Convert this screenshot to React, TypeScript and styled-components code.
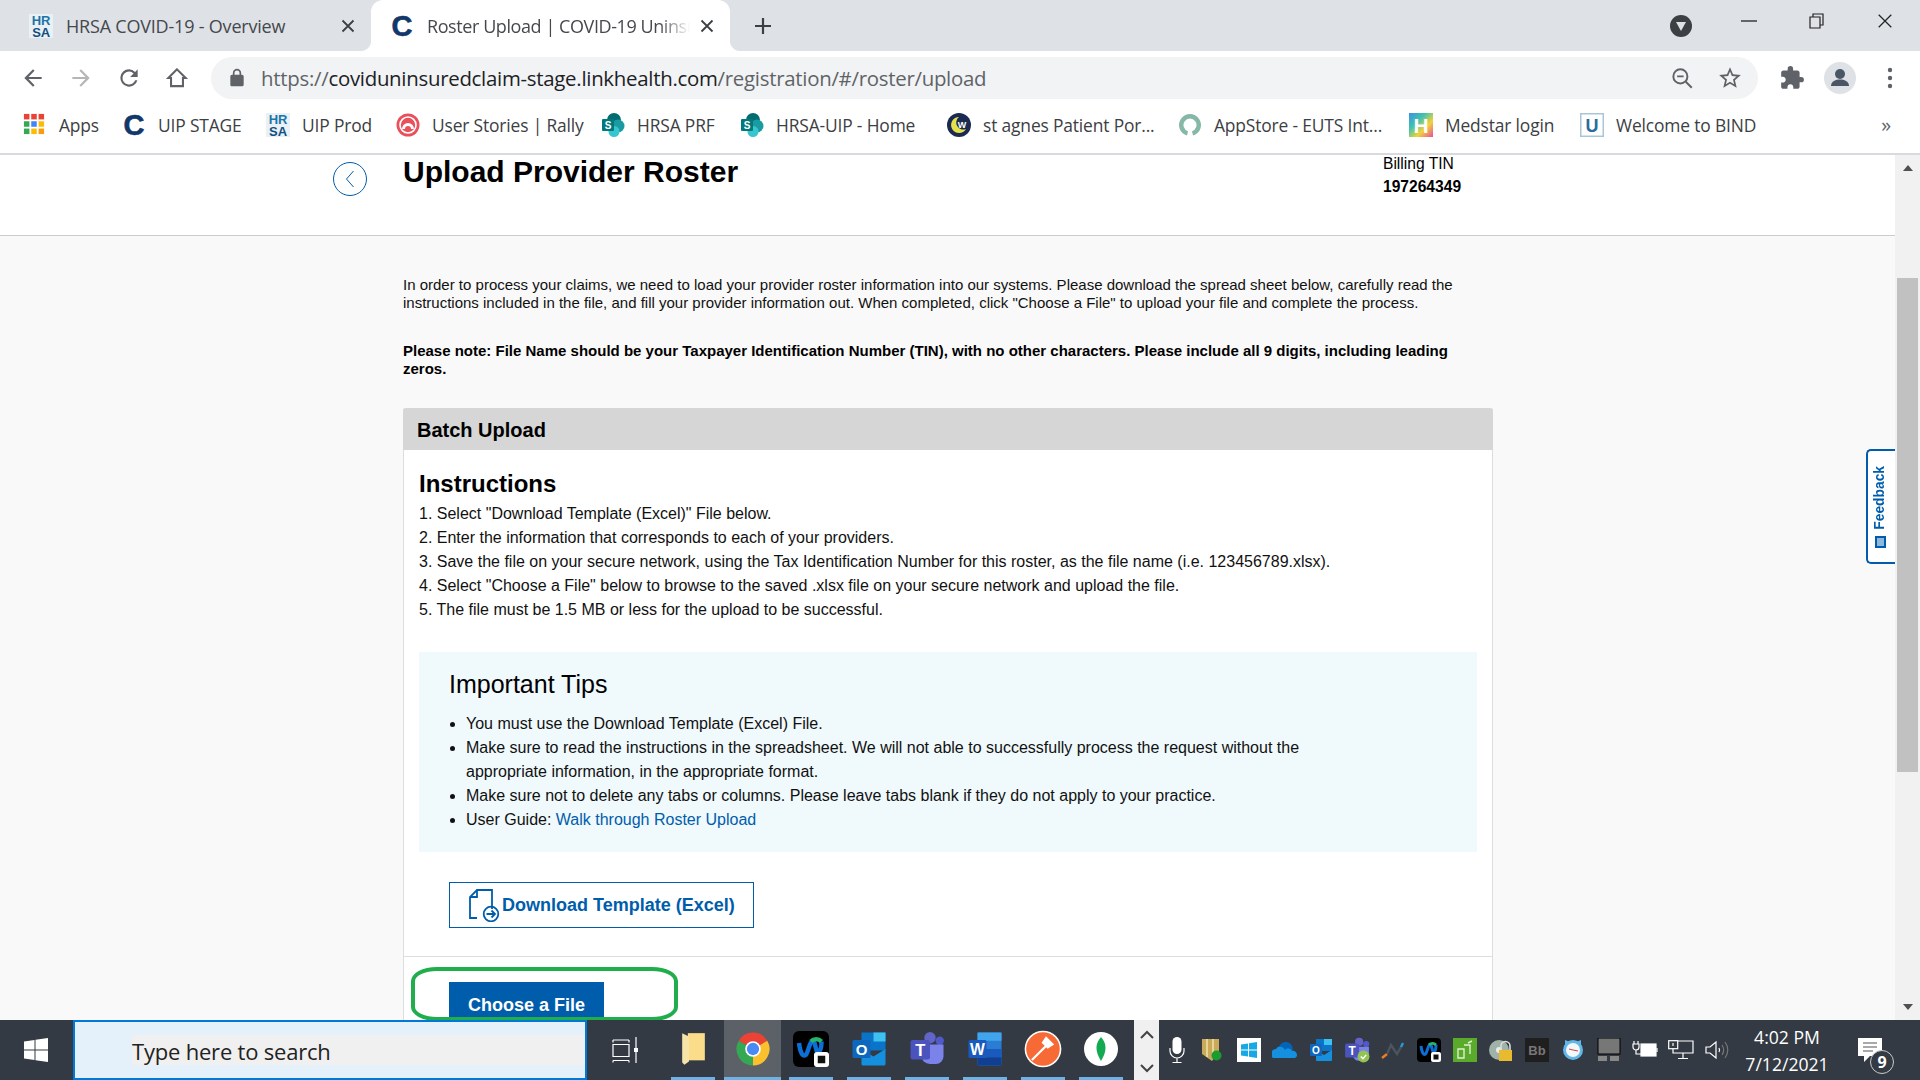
import React from "react";
import styled, { createGlobalStyle } from "styled-components";

const Global = createGlobalStyle`
  html, body { margin: 0; padding: 0; height: 100%; overflow: hidden; background: #fff; }
  #root { height: 100%; }
  * { box-sizing: border-box; }
`;

const UI_FONT = `"Open Sans", "Noto Sans", sans-serif`;
const PAGE_FONT = `"Liberation Sans", Arial, sans-serif`;
const BLUE = "#005dab";

const Screen = styled.div`
  width: 1920px; height: 1080px; display: flex; flex-direction: column; overflow: hidden;
  font-family: ${PAGE_FONT};
`;

/* ---------- Chrome: tabs ---------- */
const TabStrip = styled.div`
  height: 51px; flex: none; background: #dee1e6; display: flex; align-items: stretch;
  font-family: ${UI_FONT}; font-size: 18px; letter-spacing: -0.2px; color: #45484c;
`;
const Tab = styled.div<{ $active?: boolean }>`
  position: relative; display: flex; align-items: center; flex: none;
  width: ${p => (p.$active ? 359 : 371)}px;
  padding: ${p => (p.$active ? "0 16px 0 19px" : "0 16px 0 29px")};
  background: ${p => (p.$active ? "#fff" : "transparent")};
  border-radius: ${p => (p.$active ? "12px 12px 0 0" : "0")};
  ${p => p.$active ? `
    &::before, &::after { content: ""; position: absolute; bottom: 0; width: 10px; height: 10px; }
    &::before { left: -10px; background: radial-gradient(circle at 0 0, transparent 9.5px, #fff 10.5px); }
    &::after { right: -10px; background: radial-gradient(circle at 100% 0, transparent 9.5px, #fff 10.5px); }
  ` : ""}
`;
const TabIcon = styled.span`
  width: 24px; height: 24px; flex: none; margin-right: 13px; display: flex;
`;
const TabTitle = styled.span<{ $fade?: boolean }>`
  flex: 1; min-width: 0; overflow: hidden; white-space: nowrap;
  ${p => p.$fade ? "letter-spacing: -0.42px; -webkit-mask-image: linear-gradient(90deg,#000 88%,transparent 100%); mask-image: linear-gradient(90deg,#000 88%,transparent 100%);" : ""}
`;
const TabClose = styled.span`
  width: 14px; height: 14px; flex: none; display: flex; margin-left: 10px;
`;
const NewTab = styled.span`
  width: 20px; height: 20px; margin: 16px 0 0 23px; flex: none; display: flex;
`;
const StripSpacer = styled.div`flex: 1;`;
const ProfileDrop = styled.span`
  width: 22px; height: 22px; border-radius: 50%; background: #3c4043; margin: 15px 23px 0 0; flex: none;
  display: flex; align-items: center; justify-content: center;
`;
const WinBtn = styled.span`
  width: 68px; height: 42px; flex: none; display: flex; align-items: center; justify-content: center;
`;
const WinControls = styled.div`display: flex; padding-right: 1px;`;

/* ---------- Chrome: toolbar ---------- */
const Toolbar = styled.div`
  height: 51px; flex: none; background: #fff; display: flex; align-items: center; padding: 3px 0 0 19px;
`;
const NavBtn = styled.span`
  width: 28px; height: 28px; margin-right: 20px; flex: none; display: flex; align-items: center; justify-content: center;
`;
const Omnibox = styled.div`
  width: 1547px; height: 42px; flex: none; border-radius: 21px; background: #f1f3f4;
  display: flex; align-items: center; padding: 0 15px 0 16px;
  font-family: ${UI_FONT}; font-size: 20.4px; letter-spacing: -0.27px;
`;
const LockWrap = styled.span`width: 20px; height: 20px; margin-right: 14px; display: flex; flex: none;`;
const UrlHost = styled.span`color: #202124;`;
const UrlScheme = styled.span`color: #5f6368;`;
const OmniSpacer = styled.span`flex: 1;`;
const OmniIcon = styled.span`
  width: 26px; height: 26px; margin-left: 22px; display: flex; flex: none;
`;
const ToolIcon = styled.span`
  width: 28px; height: 28px; flex: none; margin-left: 20px; display: flex; align-items: center; justify-content: center;
`;
const Avatar = styled.span`
  width: 32px; height: 32px; border-radius: 50%; background: #dee1e6; flex: none; margin-left: 18px;
  display: flex; align-items: center; justify-content: center; overflow: hidden;
`;

/* ---------- Chrome: bookmarks ---------- */
const BookmarkBar = styled.div`
  height: 51px; flex: none; background: #fff; display: flex; align-items: center; padding: 0 0 5px 23px;
  font-family: ${UI_FONT}; font-size: 17.4px; letter-spacing: -0.15px; color: #3c4043;
  position: relative;
`;
const Bookmark = styled.span<{ $w: number }>`
  width: ${p => p.$w}px; flex: none; display: flex; align-items: center; white-space: nowrap;
`;
const BookmarkIcon = styled.span`
  width: 24px; height: 24px; margin-right: 12px; flex: none; display: flex;
`;
const More = styled.span`
  margin-left: auto; margin-right: 29px; font-size: 20px; color: #5f6368; line-height: 1;
`;
const LogoC = styled.span`
  width: 24px; height: 24px; flex: none; display: block; text-align: center;
  font-family: ${PAGE_FONT}; font-size: 29px; font-weight: 700; line-height: 24px; letter-spacing: 0;
  color: #12376b; -webkit-text-stroke: 0.6px #12376b;
`;

/* ---------- Page ---------- */
const Viewport = styled.div`
  flex: 1; min-height: 0; display: flex; border-top: 2px solid #d9dadd; position: relative; overflow: hidden;
`;
const Main = styled.div`
  flex: 1; min-width: 0; background: #f9f9f9; overflow: hidden; position: relative; color: #000;
`;
const PageHead = styled.header`
  height: 81px; background: #fff; border-bottom: 1px solid #ccc; display: flex; align-items: flex-start;
`;
const BackCircle = styled.span`
  width: 34px; height: 34px; border-radius: 50%; border: 1px solid ${BLUE}; margin: 7px 0 0 333px; flex: none;
  display: flex; align-items: center; justify-content: center;
`;
const Title = styled.h1`
  margin: 0 0 0 36px; width: 980px; flex: none; font-size: 30px; line-height: 34px; font-weight: 700;
`;
const TinBox = styled.div`font-size: 15.6px; line-height: 23px; margin-top: -3px;`;
const TinValue = styled.div`font-weight: 700;`;

const Content = styled.div`
  width: 1090px; margin-left: 403px; padding-top: 40px;
`;
const Intro = styled.p`
  margin: 0 0 30px; font-size: 15px; line-height: 18px; color: #111;
`;
const Note = styled(Intro)`
  font-weight: 700; margin-bottom: 30px; color: #000;
`;
const Card = styled.section`
  background: #fff; border: 1px solid #ddd; border-top: 0; border-radius: 3px 3px 0 0;
`;
const CardHead = styled.div`
  height: 42px; margin: 0 -1px; background: #d6d6d6; border-radius: 3px 3px 0 0; padding-left: 14px;
  font-size: 20px; font-weight: 700; line-height: 44px;
`;
const CardBody = styled.div`padding: 20px 15px 28px 15px;`;
const H2 = styled.h2`
  margin: 0; font-size: 24px; font-weight: 700; line-height: 28px;
`;
const Steps = styled.div`margin: 4px 0 0 0; height: 150px;`;
const Step = styled.div`font-size: 16px; line-height: 24px; color: #111;`;
const Tips = styled.div`
  background: #f0f9fc; height: 200px; padding: 17px 30px 0;
`;
const H3 = styled.h3`
  margin: 0 0 13px; font-size: 25px; font-weight: 400; line-height: 30px;
`;
const TipList = styled.ul`
  margin: 0; padding: 0 0 0 17px; width: 895px; font-size: 16px; line-height: 24px; color: #111;
`;
const Tip = styled.li``;
const Link = styled.a`color: #005dab; text-decoration: none;`;
const OutlineBtn = styled.button`
  margin: 30px 0 0 30px; width: 305px; height: 46px; display: flex; align-items: center; padding: 0 0 0 18px;
  background: #fff; border: 1px solid ${BLUE}; color: ${BLUE}; font-family: ${PAGE_FONT};
  font-size: 18px; font-weight: 700; gap: 2px;
`;
const ActionRow = styled.div`
  position: relative; border-top: 1px solid #ddd; padding: 25px 0 0 45px; height: 120px;
`;
const SolidBtn = styled.button`
  width: 155px; height: 46px; background: ${BLUE}; border: 0; color: #fff; font-family: ${PAGE_FONT};
  font-size: 18px; font-weight: 700; padding: 0;
`;
const Ring = styled.span`
  position: absolute; left: 7px; top: 10px; width: 267px; height: 54px;
  border: 4px solid #1fae4b; border-radius: 26px / 14px; pointer-events: none;
`;

const Feedback = styled.div`
  position: absolute; right: 0; top: 294px; width: 29px; height: 115px; background: #fff;
  border: 2px solid ${BLUE}; border-right: 0; border-radius: 5px 0 0 5px;
  display: flex; flex-direction: column-reverse; align-items: center; padding: 15px 3px 14px 0; gap: 6px;
  color: ${BLUE}; font-size: 13.8px; font-weight: 700;
`;
const FeedbackText = styled.span`
  writing-mode: vertical-rl; transform: rotate(180deg); line-height: 14px;
`;
const FeedbackIcon = styled.span`
  width: 11px; height: 12px; border: 2px solid ${BLUE}; background: #8fb9dc; flex: none;
`;

const Scrollbar = styled.div`
  width: 25px; flex: none; background: #f1f1f1; display: flex; flex-direction: column; align-items: center; position: relative;
`;
const ScrollArrow = styled.span<{ $down?: boolean }>`
  width: 0; height: 0; border-left: 5px solid transparent; border-right: 5px solid transparent;
  ${p => p.$down ? "border-top: 6px solid #505050; margin-top: 232px;" : "border-bottom: 6px solid #505050; margin-top: 10px;"}
`;
const Thumb = styled.span`
  width: 21px; height: 494px; background: #c1c1c1; margin-top: 107px; flex: none;
`;

/* ---------- Taskbar ---------- */
const Taskbar = styled.footer`
  height: 60px; flex: none; background: #333a43; display: flex; align-items: stretch; color: #fff; font-family: ${UI_FONT};
`;
const StartBtn = styled.span`
  width: 73px; flex: none; display: flex; align-items: center; justify-content: center; padding-right: 2px;
`;
const SearchBox = styled.div`
  width: 514px; flex: none; background: #e4f1fb; border: 2px solid #0078d7;
  display: flex; align-items: center; padding-left: 57px;
`;
const SearchStrip = styled.div`
  flex: 1; height: 30px; background: #f0f0f0; color: #222; font-size: 22px; letter-spacing: -0.2px;
  line-height: 32px; white-space: nowrap;
`;
const TaskView = styled.span`
  width: 84px; flex: none; display: flex; align-items: center; justify-content: center; padding-right: 8px;
`;
const Pinned = styled.div`flex: 1; min-width: 0; display: flex;`;
const PinCell = styled.span<{ $active?: boolean }>`
  position: relative; flex: none; display: flex; align-items: center; justify-content: center; padding-bottom: 3px;
  width: ${p => (p.$active ? 57 : 44)}px;
  margin: ${p => (p.$active ? "0 8px 0 -5px" : "0 14px 0 0")};
  background: ${p => (p.$active ? "#5c6168" : "transparent")};
  &::after { content: ""; position: absolute; left: 0; right: 0; bottom: 0; height: 3px; background: #6eb2e6; }
`;
const Chevrons = styled.div`
  width: 25px; flex: none; background: #f0f0f0; display: flex; flex-direction: column; align-items: center; justify-content: space-between; padding: 10px 0 7px;
`;
const Tray = styled.div`width: 576px; flex: none; display: grid; grid-template-columns: repeat(16, 36px);`;
const TrayCell = styled.span`display: flex; align-items: center; justify-content: center;`;
const Clock = styled.div`
  width: 104px; flex: none; text-align: center; font-size: 17.6px; line-height: 27px; padding-top: 4px; white-space: nowrap;
`;
const Notify = styled.span`width: 81px; flex: none; position: relative; display: flex; padding: 18px 0 0 19px;`;
const Badge = styled.span`
  position: absolute; left: 31px; top: 30px; width: 24px; height: 24px; border-radius: 50%;
  border: 1px solid #ccc; background: #333a43; display: flex; align-items: center; justify-content: center;
  font-size: 16px; font-weight: 700; line-height: 1;
`;

/* ---------- Drawn icons ---------- */
type IP = { s?: number };
const Svg: React.FC<React.PropsWithChildren<{ s?: number; v?: string }>> = ({ s = 24, v = "0 0 24 24", children }) => (
  <svg width={s} height={s} viewBox={v} xmlns="http://www.w3.org/2000/svg">{children}</svg>
);
const HrsaLogo = ({ s = 24 }: IP) => (
  <Svg s={s}>
    <rect width="24" height="24" fill="#e9f1f6" />
    <text x="12" y="11" textAnchor="middle" fontFamily="Liberation Sans" fontWeight="700" fontSize="13" fill="#1b75a6">HR</text>
    <text x="12" y="22.5" textAnchor="middle" fontFamily="Liberation Sans" fontWeight="700" fontSize="13" fill="#124f80">SA</text>
  </Svg>
);
const AppsGrid = () => {
  const c = ["#ea4335", "#ea4335", "#ea4335", "#34a853", "#4285f4", "#fbbc04", "#34a853", "#fbbc04", "#fb9c0c"];
  return (
    <Svg s={22}>
      {c.map((f, i) => <rect key={i} x={1 + (i % 3) * 8} y={1 + Math.floor(i / 3) * 8} width="6" height="6" fill={f} />)}
    </Svg>
  );
};
const Rally = () => (
  <Svg>
    <circle cx="12" cy="12" r="11.5" fill="#e8505b" />
    <circle cx="12" cy="12" r="8" fill="none" stroke="#fff" strokeWidth="1.6" />
    <path d="M6 16a6 6 0 0 1 12 0" fill="#fff" />
    <path d="M9 16a3 3 0 0 1 6 0" fill="#e8505b" />
  </Svg>
);
const SharePoint = () => (
  <Svg>
    <circle cx="13" cy="7" r="7" fill="#036c70" />
    <circle cx="17" cy="13" r="6.5" fill="#1a9ba1" />
    <circle cx="13" cy="18.5" r="5.5" fill="#37c6d0" />
    <rect x="1" y="6" width="12" height="12" rx="1" fill="#03787c" />
    <text x="7" y="16" textAnchor="middle" fontFamily="Liberation Sans" fontWeight="700" fontSize="10" fill="#fff">S</text>
  </Svg>
);
const Agnes = () => (
  <Svg>
    <circle cx="12" cy="12" r="12" fill="#1b2a50" />
    <path d="M12 4a8 8 0 1 0 7 12 7 7 0 0 1-7-12z" fill="#e6e04a" />
    <text x="15" y="15" textAnchor="middle" fontFamily="Liberation Sans" fontWeight="700" fontSize="9" fill="#fff">W</text>
  </Svg>
);
const AppStoreRing = () => (
  <Svg>
    <path d="M9 22.6A11 11 0 1 1 15 22.6L14 18.2A6.5 6.5 0 1 0 10 18.2z" fill="#85b9a6" />
  </Svg>
);
const Medstar = () => (
  <svg width="24" height="24" viewBox="0 0 24 24">
    <defs>
      <linearGradient id="med" x1="0" y1="0" x2="1" y2="1">
        <stop offset="0" stopColor="#3f8fe0" /><stop offset=".35" stopColor="#40c4b0" />
        <stop offset=".65" stopColor="#f3d23a" /><stop offset="1" stopColor="#e94f9a" />
      </linearGradient>
    </defs>
    <rect width="24" height="24" fill="url(#med)" />
    <text x="12" y="20" textAnchor="middle" fontFamily="Liberation Sans" fontWeight="700" fontSize="21" fill="#fff">H</text>
  </svg>
);
const Bind = () => (
  <Svg>
    <rect x=".75" y=".75" width="22.5" height="22.5" fill="#fff" stroke="#a9c6d8" strokeWidth="1.5" />
    <text x="12" y="19" textAnchor="middle" fontFamily="Liberation Sans" fontWeight="700" fontSize="18" fill="#2a6d9b">U</text>
  </Svg>
);
const Cross = ({ s = 14, c = "#3c4043", w = 1.8 }: { s?: number; c?: string; w?: number }) => (
  <Svg s={s} v="0 0 14 14"><path d="M1.5 1.5l11 11M12.5 1.5l-11 11" stroke={c} strokeWidth={w} fill="none" /></Svg>
);
const Arrow = ({ c, flip }: { c: string; flip?: boolean }) => (
  <svg width="26" height="26" viewBox="0 0 24 24" style={flip ? { transform: "scaleX(-1)" } : undefined}>
    <path d="M20 11H7.83l5.59-5.59L12 4l-8 8 8 8 1.41-1.41L7.83 13H20v-2z" fill={c} />
  </svg>
);
const Reload = () => (
  <Svg s={26}><path d="M17.65 6.35A7.95 7.95 0 0 0 12 4a8 8 0 1 0 7.75 10h-2.08A6 6 0 1 1 12 6c1.66 0 3.14.69 4.22 1.78L13 11h7V4l-2.35 2.35z" fill="#5f6368" /></Svg>
);
const HomeIcon = () => (
  <Svg s={26}><path d="M12 4L4 12h2.5v7.5h11V12H20z" fill="none" stroke="#5f6368" strokeWidth="1.9" strokeLinejoin="miter" /></Svg>
);
const LockIcon = () => (
  <Svg s={20}><path d="M18 8h-1V6a5 5 0 0 0-10 0v2H6a2 2 0 0 0-2 2v10c0 1.1.9 2 2 2h12a2 2 0 0 0 2-2V10a2 2 0 0 0-2-2zM9 6a3 3 0 0 1 6 0v2H9V6z" fill="#5f6368" /></Svg>
);
const ZoomOutIcon = () => (
  <Svg s={26}>
    <circle cx="10.5" cy="10.5" r="6.5" fill="none" stroke="#5f6368" strokeWidth="1.8" />
    <path d="M15.5 15.5L21 21M7.5 10.5h6" stroke="#5f6368" strokeWidth="1.8" fill="none" />
  </Svg>
);
const StarIcon = () => (
  <Svg s={26}><path d="M22 9.24l-7.19-.62L12 2 9.19 8.63 2 9.24l5.46 4.73L5.82 21 12 17.27 18.18 21l-1.63-7.03L22 9.24zM12 15.4l-3.76 2.27 1-4.28-3.32-2.88 4.38-.38L12 6.1l1.71 4.04 4.38.38-3.32 2.88 1 4.28L12 15.4z" fill="#5f6368" /></Svg>
);
const PuzzleIcon = () => (
  <Svg s={26}><path d="M20.5 11H19V7c0-1.1-.9-2-2-2h-4V3.5a2.5 2.5 0 0 0-5 0V5H4c-1.1 0-1.99.9-1.99 2v3.8H3.5c1.49 0 2.7 1.21 2.7 2.7s-1.21 2.7-2.7 2.7H2V20c0 1.1.9 2 2 2h3.8v-1.5c0-1.49 1.21-2.7 2.7-2.7s2.7 1.21 2.7 2.7V22H17c1.1 0 2-.9 2-2v-4h1.5a2.5 2.5 0 0 0 0-5z" fill="#5f6368" /></Svg>
);
const PersonIcon = () => (
  <Svg s={32} v="0 0 32 32">
    <circle cx="16" cy="12" r="5" fill="#4a5565" />
    <path d="M7 24c0-5 5-6.5 9-6.5s9 1.5 9 6.5z" fill="#4a5565" />
  </Svg>
);
const DotsIcon = () => (
  <svg width="6" height="24" viewBox="0 0 6 24"><circle cx="3" cy="4" r="2.2" fill="#5f6368" /><circle cx="3" cy="12" r="2.2" fill="#5f6368" /><circle cx="3" cy="20" r="2.2" fill="#5f6368" /></svg>
);
const Chrome = () => (
  <Svg s={36}>
    <path d="M12 12L2.47 6.5A11 11 0 0 1 21.53 6.5z" fill="#ea4335" />
    <path d="M12 12L21.53 6.5A11 11 0 0 1 12 23z" fill="#fbc02d" />
    <path d="M12 12L12 23A11 11 0 0 1 2.47 6.5z" fill="#34a853" />
    <circle cx="12" cy="12" r="5.2" fill="#fff" />
    <circle cx="12" cy="12" r="4.1" fill="#4a8af4" />
  </Svg>
);
const Webex = ({ s = 36, fg = "#000" }: { s?: number; fg?: string }) => (
  <Svg s={s}>
    <rect width="24" height="24" rx="4" fill={fg} />
    <path d="M4 8c1 8 3 9 4.5 8S11 7 13 6.5 15 15 17 14s2-5 2-7" fill="none" stroke="#0b6fd6" strokeWidth="3" />
    <path d="M12 7c2-2 5-2 7 0" fill="none" stroke="#29b36b" strokeWidth="3" />
    <rect x="14" y="14" width="10" height="10" rx="2" fill="#fff" />
    <rect x="16.5" y="16.5" width="5" height="5" fill="#111" />
  </Svg>
);
const Outlook = ({ s = 36 }: IP) => (
  <Svg s={s}>
    <rect x="7" y="1" width="16" height="12" fill="#0a74c9" />
    <rect x="15" y="1" width="8" height="6" fill="#3fc0ee" />
    <path d="M7 12l8 5 8-5v10a1 1 0 0 1-1 1H8a1 1 0 0 1-1-1z" fill="#1490df" />
    <rect x="1" y="6" width="12" height="12" rx="1" fill="#0c67bd" />
    <text x="7" y="16" textAnchor="middle" fontFamily="Liberation Sans" fontWeight="700" fontSize="10" fill="#fff">O</text>
  </Svg>
);
const Teams = ({ s = 36, check }: { s?: number; check?: boolean }) => (
  <Svg s={s}>
    <circle cx="14" cy="4.5" r="3.8" fill="#6264c8" />
    <circle cx="20.5" cy="6.5" r="2.8" fill="#5059c9" />
    <path d="M8 9h15v8a5 5 0 0 1-5 5h-4a6 6 0 0 1-6-6z" fill="#7b83eb" />
    <rect x="1" y="6" width="13" height="13" rx="1.5" fill="#4b53bc" />
    <text x="7.5" y="16.5" textAnchor="middle" fontFamily="Liberation Sans" fontWeight="700" fontSize="11" fill="#fff">T</text>
    {check && <circle cx="18" cy="18" r="5.5" fill="#92c353" />}
    {check && <path d="M15.5 18l2 2 3-3.5" stroke="#fff" strokeWidth="1.4" fill="none" />}
  </Svg>
);
const Word = () => (
  <Svg s={36}>
    <rect x="7" y="1" width="16" height="22" rx="1" fill="#2b7cd3" />
    <rect x="7" y="1" width="16" height="5.5" fill="#41a5ee" />
    <rect x="7" y="12" width="16" height="5.5" fill="#185abd" />
    <rect x="7" y="17.5" width="16" height="5.5" fill="#103f91" />
    <rect x="1" y="6" width="12" height="12" rx="1" fill="#185abd" />
    <text x="7" y="16" textAnchor="middle" fontFamily="Liberation Sans" fontWeight="700" fontSize="10.5" fill="#fff">W</text>
  </Svg>
);
const Postman = () => (
  <Svg s={38}>
    <circle cx="12" cy="12" r="11.6" fill="#fff" />
    <circle cx="12" cy="12" r="10.6" fill="#f76935" />
    <path d="M5 19l9-9M8 16l8-8M14 5l4 4-3 2-3-3z" stroke="#fff" strokeWidth="1.4" fill="#fff" />
  </Svg>
);
const Mongo = ({ s = 34 }: IP) => (
  <Svg s={s}>
    <circle cx="12" cy="12" r="12" fill="#fff" />
    <path d="M12 3.5c4 4.5 4.5 9.5 0 17c-4.5-7.5-4-12.5 0-17z" fill="#13aa52" />
  </Svg>
);
const Folder = () => (
  <svg width="23" height="34" viewBox="0 0 20 30">
    <path d="M5 1h15v24H5z" fill="#fbdc8b" />
    <path d="M0 1l6 3v22l-4 3-2-2z" fill="#f6e3a8" />
  </svg>
);
const WindowsLogo = () => (
  <Svg>
    <path d="M0 3.5L10.5 2v9.5H0zM11.5 1.8L24 0v11.5H11.5zM0 12.5h10.5V22L0 20.5zM11.5 12.5H24V24l-12.5-1.8z" fill="#fff" />
  </Svg>
);
const TaskViewIcon = () => (
  <svg width="26" height="26" viewBox="0 0 26 26" fill="none" stroke="#fff" strokeWidth="1.2">
    <path d="M1 3h16M1 5.5V3M17 5.5V3M1 7.5h16v12H1zM1 23.5h16M1 25.5v-2M17 25.5v-2M24 0v11M24 15v11" />
    <rect x="22" y="11" width="4" height="4" fill="#fff" stroke="none" />
  </svg>
);
const Chev = ({ up }: { up?: boolean }) => (
  <svg width="14" height="10" viewBox="0 0 14 10"><path d={up ? "M1 8l6-6 6 6" : "M1 2l6 6 6-6"} fill="none" stroke="#444" strokeWidth="2" /></svg>
);

const Mic = () => (
  <svg width="16" height="28" viewBox="0 0 16 28" fill="none">
    <rect x="3.5" y="1" width="9" height="17" rx="4.5" fill="#fff" />
    <path d="M1 12v3a7 7 0 0 0 14 0v-3M8 22v4M3.5 26.5h9" stroke="#fff" strokeWidth="1.2" />
  </svg>
);
const ShieldTray = () => (
  <svg width="24" height="24" viewBox="0 0 24 24">
    <path d="M1 1h17v13l-7 9L1 16z" fill="#c9a95a" />
    <path d="M6 1v18M12 1v17" stroke="#e8d595" strokeWidth="2" />
    <circle cx="15.5" cy="17.5" r="5" fill="#1a9c2e" />
  </svg>
);
const WinTile = () => (
  <Svg>
    <rect width="24" height="24" fill="#fff" />
    <path d="M4 6.5l7-1V11.5H4zM12 5.3l8-1.2v7.4h-8zM4 12.5h7V18.5l-7-1zM12 12.5h8v7.4l-8-1.2z" fill="#17a9e6" />
  </Svg>
);
const OneDrive = () => (
  <svg width="26" height="18" viewBox="0 0 26 18">
    <path d="M7 6a7 7 0 0 1 13-1 6 6 0 0 1-2 8H7z" fill="#0364b8" />
    <path d="M1 17a5 5 0 0 1 3-9 5 5 0 0 1 9 1 4 4 0 0 1 7 1 4 4 0 0 1 5 4 3 3 0 0 1-2 3z" fill="#1490df" />
  </svg>
);
const Wave = () => (
  <svg width="24" height="18" viewBox="0 0 24 18" fill="none" strokeWidth="2.4">
    <path d="M1 17l5-4" stroke="#ef7d22" /><path d="M6 13l4-9 6 9 4-7" stroke="#4b5560" /><path d="M20 6l2-4" stroke="#1ea0d8" />
  </svg>
);
const GreenTile = () => (
  <Svg>
    <rect width="24" height="24" fill="#5aaa2b" />
    <path d="M5 11h6v9H5zM11 7h6v9" fill="none" stroke="#dff0d0" strokeWidth="1.4" />
    <path d="M15 5l4-2" stroke="#dff0d0" strokeWidth="1.4" />
  </Svg>
);
const DiskLock = () => (
  <Svg>
    <circle cx="10" cy="12" r="10" fill="#9fb3a8" />
    <circle cx="10" cy="12" r="3" fill="#e8ecec" />
    <path d="M12 12V8a4.5 4.5 0 0 1 9 0v4" fill="none" stroke="#ddd" strokeWidth="1.6" />
    <rect x="10" y="12" width="13" height="11" fill="#e8bb2f" />
  </Svg>
);
const BbTile = () => (
  <svg width="24" height="24" viewBox="0 0 24 24">
    <rect width="24" height="24" fill="#201f1f" />
    <text x="12" y="17" textAnchor="middle" fontFamily="Liberation Sans" fontSize="13" fontWeight="700" fill="#777">Bb</text>
  </svg>
);
const ClockTray = () => (
  <Svg>
    <path d="M4 2l5 2-5 5zM20 2l-5 2 5 5z" fill="#63b7e8" />
    <circle cx="12" cy="12" r="10" fill="#63b7e8" />
    <circle cx="12" cy="12" r="7" fill="#f2f7fa" />
    <path d="M12 12l-4-1M12 12l5 1" stroke="#c44" strokeWidth="1" />
  </Svg>
);
const GreyTray = () => (
  <Svg>
    <rect width="22" height="16" x="1" fill="#777" stroke="#000" />
    <rect x="1" y="18" width="9" height="5" fill="#888" />
    <rect x="13" y="18" width="9" height="5" fill="#888" />
  </Svg>
);
const PowerTray = () => (
  <svg width="26" height="20" viewBox="0 0 26 20" fill="none" stroke="#fff" strokeWidth="1.2">
    <path d="M2 1v3M6 1v3M1 4h6v3a3 3 0 0 1-6 0zM4 10v4h5" />
    <rect x="9" y="4" width="15" height="12" fill="#fff" />
    <path d="M25 8v4" />
  </svg>
);
const NetTray = () => (
  <svg width="26" height="20" viewBox="0 0 26 20" fill="none" stroke="#fff" strokeWidth="1.2">
    <path d="M5 1h20v12H5zM15 13v5M10 18.5h10" />
    <rect x=".7" y=".7" width="9" height="8" fill="#333a43" />
    <path d="M5 3v3" />
  </svg>
);
const Speaker = () => (
  <svg width="24" height="20" viewBox="0 0 24 20" fill="none" stroke="#fff" strokeWidth="1.2">
    <path d="M1 7h4l6-5v16l-6-5H1z" />
    <path d="M14 8a4 4 0 0 1 0 4" />
    <path d="M17 5a9 9 0 0 1 0 10M20 2a13 13 0 0 1 0 16" stroke="#777" />
  </svg>
);
const FileGo = () => (
  <svg width="32" height="33" viewBox="0 0 32 33" fill="none" stroke={BLUE} strokeWidth="1.8">
    <path d="M9 29H2V8L9 1h15v19M9 1v7H2" />
    <circle cx="23" cy="25" r="7.3" />
    <path d="M18.5 25h8M23.5 21.5l3.5 3.5-3.5 3.5" strokeWidth="1.8" />
  </svg>
);

/* ---------- Data ---------- */
const bookmarks: { label: string; w: number; icon: React.ReactNode }[] = [
  { label: "Apps", w: 99, icon: <AppsGrid /> },
  { label: "UIP STAGE", w: 144, icon: <LogoC>C</LogoC> },
  { label: "UIP Prod", w: 130, icon: <HrsaLogo /> },
  { label: "User Stories | Rally", w: 205, icon: <Rally /> },
  { label: "HRSA PRF", w: 139, icon: <SharePoint /> },
  { label: "HRSA-UIP - Home", w: 207, icon: <SharePoint /> },
  { label: "st agnes Patient Por...", w: 231, icon: <Agnes /> },
  { label: "AppStore - EUTS Int...", w: 231, icon: <AppStoreRing /> },
  { label: "Medstar login", w: 171, icon: <Medstar /> },
  { label: "Welcome to BIND", w: 200, icon: <Bind /> },
];
const pinned: { key: string; active?: boolean; icon: React.ReactNode }[] = [
  { key: "files", icon: <Folder /> },
  { key: "chrome", active: true, icon: <Chrome /> },
  { key: "webex", icon: <Webex /> },
  { key: "outlook", icon: <Outlook /> },
  { key: "teams", icon: <Teams /> },
  { key: "word", icon: <Word /> },
  { key: "postman", icon: <Postman /> },
  { key: "mongo", icon: <Mongo /> },
];
const tray: React.ReactNode[] = [
  <Mic />, <ShieldTray />, <WinTile />, <OneDrive />, <Outlook s={24} />, <Teams s={26} check />, <Wave />,
  <Webex s={24} />, <GreenTile />, <DiskLock />, <BbTile />, <ClockTray />, <GreyTray />, <PowerTray />, <NetTray />, <Speaker />,
];
const steps = [
  '1. Select "Download Template (Excel)" File below.',
  "2. Enter the information that corresponds to each of your providers.",
  "3. Save the file on your secure network, using the Tax Identification Number for this roster, as the file name (i.e. 123456789.xlsx).",
  '4. Select "Choose a File" below to browse to the saved .xlsx file on your secure network and upload the file.',
  "5. The file must be 1.5 MB or less for the upload to be successful.",
];

export default function App() {
  return (
    <Screen>
      <Global />
      <TabStrip>
        <Tab>
          <TabIcon><HrsaLogo /></TabIcon>
          <TabTitle>HRSA COVID-19 - Overview</TabTitle>
          <TabClose><Cross /></TabClose>
        </Tab>
        <Tab $active>
          <TabIcon><LogoC>C</LogoC></TabIcon>
          <TabTitle $fade>Roster Upload | COVID-19 Uninsu</TabTitle>
          <TabClose><Cross /></TabClose>
        </Tab>
        <NewTab>
          <svg width="20" height="20" viewBox="0 0 20 20"><path d="M10 2v16M2 10h16" stroke="#3c4043" strokeWidth="2.2" /></svg>
        </NewTab>
        <StripSpacer />
        <ProfileDrop>
          <svg width="10" height="9" viewBox="0 0 10 9"><path d="M0 0h10L5 9z" fill="#dee1e6" /></svg>
        </ProfileDrop>
        <WinControls>
          <WinBtn><svg width="16" height="2" viewBox="0 0 16 2"><path d="M0 1h16" stroke="#222" strokeWidth="1.3" /></svg></WinBtn>
          <WinBtn><svg width="16" height="16" viewBox="0 0 16 16" fill="none" stroke="#222" strokeWidth="1.2"><path d="M1 4h10v11H1zM4 4V1h10v11h-3" /></svg></WinBtn>
          <WinBtn><Cross s={16} c="#222" w={1.1} /></WinBtn>
        </WinControls>
      </TabStrip>

      <Toolbar>
        <NavBtn><Arrow c="#5f6368" /></NavBtn>
        <NavBtn><Arrow c="#b4b6b8" flip /></NavBtn>
        <NavBtn><Reload /></NavBtn>
        <NavBtn><HomeIcon /></NavBtn>
        <Omnibox>
          <LockWrap><LockIcon /></LockWrap>
          <UrlScheme>https://</UrlScheme><UrlHost>coviduninsuredclaim-stage.linkhealth.com</UrlHost><UrlScheme>/registration/#/roster/upload</UrlScheme>
          <OmniSpacer />
          <OmniIcon><ZoomOutIcon /></OmniIcon>
          <OmniIcon><StarIcon /></OmniIcon>
        </Omnibox>
        <ToolIcon><PuzzleIcon /></ToolIcon>
        <Avatar><PersonIcon /></Avatar>
        <ToolIcon><DotsIcon /></ToolIcon>
      </Toolbar>

      <BookmarkBar>
        {bookmarks.map(b => (
          <Bookmark key={b.label + b.w} $w={b.w}>
            <BookmarkIcon>{b.icon}</BookmarkIcon>
            {b.label}
          </Bookmark>
        ))}
        <More>»</More>
      </BookmarkBar>

      <Viewport>
        <Main>
          <PageHead>
            <BackCircle>
              <svg width="10" height="20" viewBox="0 0 10 20"><path d="M8.5 2L1.5 10l7 8" fill="none" stroke={BLUE} strokeWidth="1" /></svg>
            </BackCircle>
            <Title>Upload Provider Roster</Title>
            <TinBox>
              Billing TIN
              <TinValue>197264349</TinValue>
            </TinBox>
          </PageHead>
          <Content>
            <Intro>
              In order to process your claims, we need to load your provider roster information into our systems. Please download the spread sheet below, carefully read the instructions included in the file, and fill your provider information out. When completed, click "Choose a File" to upload your file and complete the process.
            </Intro>
            <Note>
              Please note: File Name should be your Taxpayer Identification Number (TIN), with no other characters. Please include all 9 digits, including leading zeros.
            </Note>
            <Card>
              <CardHead>Batch Upload</CardHead>
              <CardBody>
                <H2>Instructions</H2>
                <Steps>
                  {steps.map(s => <Step key={s}>{s}</Step>)}
                </Steps>
                <Tips>
                  <H3>Important Tips</H3>
                  <TipList>
                    <Tip>You must use the Download Template (Excel) File.</Tip>
                    <Tip>Make sure to read the instructions in the spreadsheet. We will not able to successfully process the request without the appropriate information, in the appropriate format.</Tip>
                    <Tip>Make sure not to delete any tabs or columns. Please leave tabs blank if they do not apply to your practice.</Tip>
                    <Tip>User Guide: <Link href="#">Walk through Roster Upload</Link></Tip>
                  </TipList>
                </Tips>
                <OutlineBtn><FileGo />Download Template (Excel)</OutlineBtn>
              </CardBody>
              <ActionRow>
                <SolidBtn>Choose a File</SolidBtn>
                <Ring />
              </ActionRow>
            </Card>
          </Content>
          <Feedback>
            <FeedbackIcon />
            <FeedbackText>Feedback</FeedbackText>
          </Feedback>
        </Main>
        <Scrollbar>
          <ScrollArrow />
          <Thumb />
          <ScrollArrow $down />
        </Scrollbar>
      </Viewport>

      <Taskbar>
        <StartBtn><WindowsLogo /></StartBtn>
        <SearchBox><SearchStrip>Type here to search</SearchStrip></SearchBox>
        <TaskView><TaskViewIcon /></TaskView>
        <Pinned>
          {pinned.map(p => <PinCell key={p.key} $active={p.active}>{p.icon}</PinCell>)}
        </Pinned>
        <Chevrons><Chev up /><Chev /></Chevrons>
        <Tray>
          {tray.map((t, i) => <TrayCell key={i}>{t}</TrayCell>)}
        </Tray>
        <Clock>4:02 PM<br />7/12/2021</Clock>
        <Notify>
          <svg width="24" height="26" viewBox="0 0 24 26">
            <path d="M0 0h24v18H12l-6 6v-6H0z" fill="#fff" />
            <path d="M5 5h14M5 9h14M5 13h10" stroke="#555" strokeWidth="1.2" />
          </svg>
          <Badge>9</Badge>
        </Notify>
      </Taskbar>
    </Screen>
  );
}
